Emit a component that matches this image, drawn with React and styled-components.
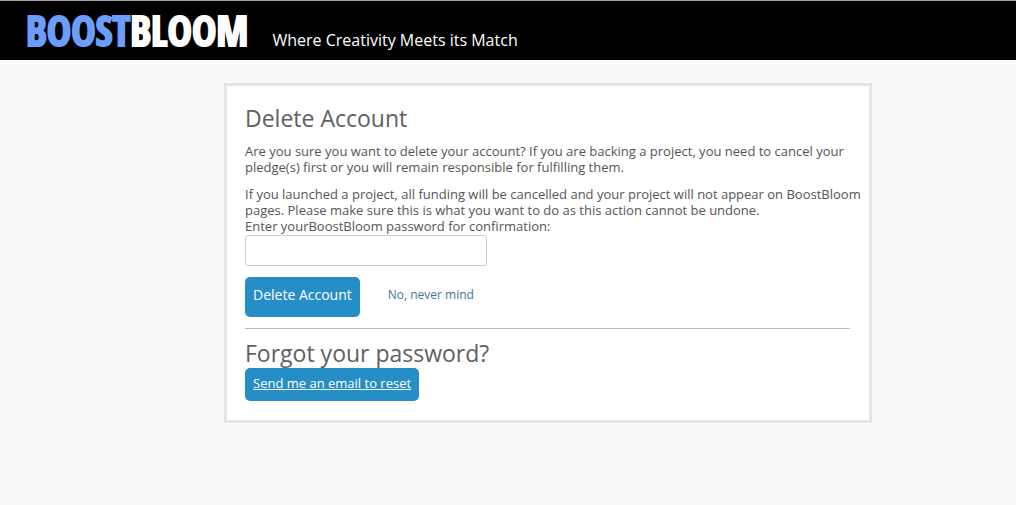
import React from "react";
import styled, { createGlobalStyle } from "styled-components";

const GlobalStyle = createGlobalStyle`
  *, *::before, *::after { box-sizing: border-box; }
  body {
    margin: 0;
    background: #fafafa;
    color: #555;
    font-family: "Open Sans", "Noto Sans", sans-serif;
    font-size: 13px;
    line-height: 16px;
  }
`;

const Header = styled.header`
  display: flex;
  align-items: flex-start;
  gap: 24px;
  height: 60px;
  padding: 0 26px;
  border-top: 1px solid #a0a0a0;
  background: #000;
  color: #fff;
`;

const Logo = styled.a`
  font-family: "Open Sans Condensed", "Roboto Condensed", sans-serif;
  font-size: 41px;
  font-weight: 700;
  line-height: 58px;
  color: #fff;
  text-decoration: none;
  -webkit-text-stroke: 2px currentColor;
`;

const LogoAccent = styled.span`
  color: #6c9dfb;
`;

const Tagline = styled.p`
  margin: 0;
  padding-top: 27px;
  font-size: 16px;
  line-height: 24px;
`;

const Main = styled.main`
  padding: 23px 144px 24px 224px;
`;

const Card = styled.section`
  padding: 19px 19px 19px 18px;
  border: 3px solid #e5e5e5;
  background: #fff;
`;

const Title = styled.h1`
  margin: 0;
  font-size: 23px;
  line-height: 27px;
  font-weight: 400;
  color: #606060;
`;

const Text = styled.p`
  margin: 11px -16px 0 0;
`;

const Label = styled.label`
  display: block;
`;

const PasswordInput = styled.input`
  display: block;
  width: 242px;
  height: 31px;
  margin-top: 1px;
  padding: 4px 8px;
  border: 1px solid #ccc;
  border-radius: 3px;
  background: #fff;
  font: inherit;
`;

const Actions = styled.div`
  display: flex;
  align-items: center;
  gap: 28px;
  margin-top: 11px;
`;

const Button = styled.button`
  display: block;
  height: ${(p) => (p.$compact ? 33 : 40)}px;
  margin-top: ${(p) => (p.$compact ? 1 : 0)}px;
  padding: 0 8px 4px;
  border: 0;
  border-radius: 5px;
  background: #268ec6;
  color: #fff;
  font: inherit;
  font-size: ${(p) => (p.$compact ? 13 : 14)}px;
  text-decoration: ${(p) => (p.$compact ? "underline" : "none")};
  cursor: pointer;
`;

const CancelLink = styled.a`
  padding-bottom: 4px;
  color: #42759c;
  font-size: 12px;
  text-decoration: none;
`;

const Divider = styled.hr`
  margin: 11px 0;
  border: 0;
  border-top: 1px solid #bbb;
`;

export default function App() {
  return (
    <>
      <GlobalStyle />
      <Header>
        <Logo href="#">
          <LogoAccent>BOOST</LogoAccent>BLOOM
        </Logo>
        <Tagline>Where Creativity Meets its Match</Tagline>
      </Header>
      <Main>
        <Card>
          <Title>Delete Account</Title>
          <Text>
            Are you sure you want to delete your account? If you are backing a
            project, you need to cancel your pledge(s) first or you will remain
            responsible for fulfilling them.
          </Text>
          <Text>
            If you launched a project, all funding will be cancelled and your
            project will not appear on BoostBloom pages. Please make sure this
            is what you want to do as this action cannot be undone.
          </Text>
          <form onSubmit={(e) => e.preventDefault()}>
            <Label htmlFor="password">
              Enter yourBoostBloom password for confirmation:
            </Label>
            <PasswordInput id="password" type="password" />
            <Actions>
              <Button type="submit">Delete Account</Button>
              <CancelLink href="#">No, never mind</CancelLink>
            </Actions>
          </form>
          <Divider />
          <Title as="h2">Forgot your password?</Title>
          <Button type="button" $compact>
            Send me an email to reset
          </Button>
        </Card>
      </Main>
    </>
  );
}
